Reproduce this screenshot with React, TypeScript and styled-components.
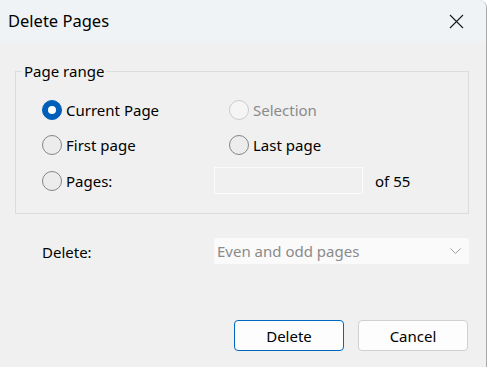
import React from "react";
import styled, { createGlobalStyle } from "styled-components";

const Global = createGlobalStyle`
  html, body { margin: 0; padding: 0; background: #ffffff; }
  body { font-family: "Noto Sans", "Open Sans", sans-serif; }
`;

const Window = styled.div`
  width: 486px;
  height: 367px;
  border-right: 1px solid #a9a9a9;
  border-top-right-radius: 8px;
  overflow: hidden;
  background: #f0f0f0;
  display: flex;
  flex-direction: column;
  color: #000;
`;

const TitleBar = styled.div`
  height: 43px;
  flex: none;
  background: #eff3f6;
  display: flex;
  align-items: center;
  justify-content: space-between;
  padding: 0 0 0 8px;
`;

const Title = styled.div`
  font-size: 16.5px;
  margin-top: -2px;
`;

const CloseBtn = styled.div`
  width: 46px;
  height: 43px;
  display: flex;
  align-items: center;
  justify-content: center;
  margin-right: 7px;
`;

const Body = styled.div`
  flex: 1;
  padding: 28px 17px 0 15px;
  display: flex;
  flex-direction: column;
`;

const Group = styled.fieldset`
  margin: 0;
  border: 1px solid #dcdcdc;
  padding: 9px 0 0 26px;
  height: 143px;
  box-sizing: border-box;
  position: relative;
`;

const Legend = styled.legend`
  font-size: 15px;
  padding: 0 2px;
  margin-left: 6px;
  position: absolute;
  top: -11px;
  left: 0;
  background: #f0f0f0;
  line-height: 20px;
`;

const Grid = styled.div`
  display: grid;
  grid-template-columns: 187px 150px auto;
  grid-auto-rows: 35.5px;
  align-items: center;
  margin-top: 11px;
`;

const RadioLabel = styled.label<{ $disabled?: boolean }>`
  display: flex;
  align-items: center;
  gap: 4px;
  font-size: 15px;
  color: ${(p) => (p.$disabled ? "#8a8a8a" : "#000")};
`;

const Circle = styled.span<{ $checked?: boolean; $disabled?: boolean }>`
  width: 20px;
  height: 20px;
  box-sizing: border-box;
  border-radius: 50%;
  flex: none;
  display: flex;
  align-items: center;
  justify-content: center;
  background: ${(p) => (p.$checked ? "#005fb8" : p.$disabled ? "#f5f5f5" : "#ececec")};
  border: 1px solid ${(p) => (p.$checked ? "#005fb8" : p.$disabled ? "#cccccc" : "#858585")};
  &::after {
    content: "";
    display: ${(p) => (p.$checked ? "block" : "none")};
    width: 8px;
    height: 8px;
    border-radius: 50%;
    background: #ffffff;
  }
`;

const PagesInput = styled.div`
  width: 149px;
  height: 27px;
  box-sizing: border-box;
  border: 1px solid #fbfbfb;
  background: #f0f0f0;
  margin-left: -15px;
`;

const OfText = styled.span`
  font-size: 15px;
  margin-left: -4px;
`;

const DeleteRow = styled.div`
  display: flex;
  align-items: center;
  margin-top: 24px;
  padding-left: 27px;
`;

const FieldLabel = styled.span`
  font-size: 15px;
  width: 172px;
  margin-top: 1px;
`;

const Select = styled.div`
  width: 255px;
  height: 26px;
  box-sizing: border-box;
  background: #fafafa;
  border-radius: 2px;
  display: flex;
  align-items: center;
  justify-content: space-between;
  padding: 0 8px 0 3px;
  font-size: 15px;
  color: #8a8a8a;
`;

const Footer = styled.div`
  display: flex;
  justify-content: flex-end;
  gap: 14px;
  margin-top: 56px;
  padding-right: 1px;
`;

const Button = styled.button<{ $primary?: boolean }>`
  width: 110px;
  height: 31px;
  box-sizing: border-box;
  border-radius: 4px;
  background: #fdfdfd;
  border: 1px solid ${(p) => (p.$primary ? "#0067c0" : "#d0d0d0")};
  font-family: "Noto Sans", "Open Sans", sans-serif;
  font-size: 15px;
  color: #000;
  padding: 0;
`;

const Radio = ({ label, checked, disabled }: { label: string; checked?: boolean; disabled?: boolean }) => (
  <RadioLabel $disabled={disabled}>
    <Circle $checked={checked} $disabled={disabled} />
    {label}
  </RadioLabel>
);

export default function App() {
  return (
    <>
      <Global />
      <Window>
        <TitleBar>
          <Title>Delete Pages</Title>
          <CloseBtn>
            <svg width="15" height="15" viewBox="0 0 15 15">
              <path d="M1 1 L14 14 M14 1 L1 14" stroke="#1a1a1a" strokeWidth="1.1" fill="none" />
            </svg>
          </CloseBtn>
        </TitleBar>
        <Body>
          <Group>
            <Legend>Page range</Legend>
            <Grid>
              <Radio label="Current Page" checked />
              <Radio label="Selection" disabled />
              <span />
              <Radio label="First page" />
              <Radio label="Last page" />
              <span />
              <Radio label="Pages:" />
              <PagesInput />
              <OfText>of 55</OfText>
            </Grid>
          </Group>
          <DeleteRow>
            <FieldLabel>Delete:</FieldLabel>
            <Select>
              <span>Even and odd pages</span>
              <svg width="11" height="6" viewBox="0 0 11 6">
                <path d="M0.5 0.5 L5.5 5.5 L10.5 0.5" stroke="#a0a0a0" strokeWidth="1" fill="none" />
              </svg>
            </Select>
          </DeleteRow>
          <Footer>
            <Button $primary>Delete</Button>
            <Button>Cancel</Button>
          </Footer>
        </Body>
      </Window>
    </>
  );
}
